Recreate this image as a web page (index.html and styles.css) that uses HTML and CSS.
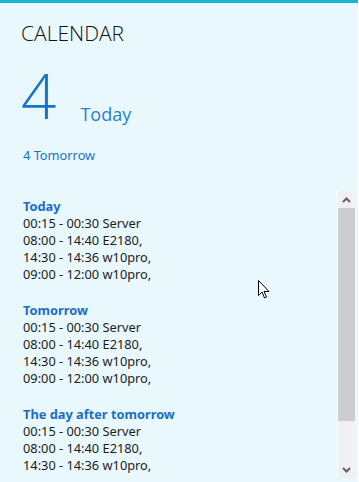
FILE: index.html
```html
<!DOCTYPE html>
<html lang="en">
<head>
    <meta charset="UTF-8">
    <meta name="viewport" content="width=device-width, initial-scale=1.0">
    <title>Calendar</title>
    <link rel="stylesheet" href="styles.css">
</head>
<body>
    <div id="painel">
        <h1 class="titulo">CALENDAR</h1>

        <div class="hoje">
            <span class="numero">4</span>
            <span class="rotulo">Today</span>
        </div>
        <p class="amanha">4 Tomorrow</p>

        <div class="lista-area">
            <div class="lista">
                <div class="dia">
                    <h2>Today</h2>
                    <p>00:15 - 00:30 Server</p>
                    <p>08:00 - 14:40 E2180,</p>
                    <p>14:30 - 14:36 w10pro,</p>
                    <p>09:00 - 12:00 w10pro,</p>
                </div>
                <div class="dia">
                    <h2>Tomorrow</h2>
                    <p>00:15 - 00:30 Server</p>
                    <p>08:00 - 14:40 E2180,</p>
                    <p>14:30 - 14:36 w10pro,</p>
                    <p>09:00 - 12:00 w10pro,</p>
                </div>
                <div class="dia">
                    <h2>The day after tomorrow</h2>
                    <p>00:15 - 00:30 Server</p>
                    <p>08:00 - 14:40 E2180,</p>
                    <p>14:30 - 14:36 w10pro,</p>
                </div>
            </div>
            <div class="barra">
                <div class="seta">
                    <svg width="9" height="6" viewBox="0 0 9 6"><path d="M1 5 L4.5 1.5 L8 5" fill="none" stroke="#606060" stroke-width="2"/></svg>
                </div>
                <div class="trilho"><div class="polegar"></div></div>
                <div class="seta">
                    <svg width="9" height="6" viewBox="0 0 9 6"><path d="M1 1 L4.5 4.5 L8 1" fill="none" stroke="#606060" stroke-width="2"/></svg>
                </div>
            </div>
        </div>

        <!-- ponteiro do mouse -->
        <svg class="cursor" width="13" height="20" viewBox="0 0 13 20">
            <path d="M0.5 0.5 L0.5 15.5 L4 12 L6.5 18 L8.5 17 L6 11.5 L11 11.5 Z" fill="#fff" stroke="#000" stroke-width="1"/>
        </svg>
    </div>
</body>
</html>
```

FILE: styles.css
```css
* {
    margin: 0;
    padding: 0;
    box-sizing: border-box;
}

body {
    font-family: "Noto Sans", "Open Sans", sans-serif;
    background-color: #fff;
    width: 359px;
    height: 482px;
    overflow: hidden;
}

#painel {
    position: relative;
    width: 358px;
    height: 482px;
    background-color: #e9f8fd;
    border-top: 3px solid #1ab3d3;
    padding: 16px 3px 4px 0;
    display: flex;
    flex-direction: column;
}

.titulo {
    font-family: "Open Sans", sans-serif;
    font-weight: 300;
    font-size: 21px;
    color: #111;
    padding-left: 21px;
    line-height: 28px;
}

.hoje {
    display: flex;
    align-items: baseline;
    padding-left: 21px;
    margin-top: 16px;
    height: 62px;
}

.numero {
    font-family: "Open Sans", sans-serif;
    font-weight: 300;
    font-size: 62px;
    line-height: 64px;
    color: #1673c9;
}

.rotulo {
    font-family: "Open Sans", sans-serif;
    font-size: 18px;
    color: #2a7fd0;
    margin-left: 24px;
    position: relative;
    top: 2px;
}

.amanha {
    font-size: 12.8px;
    color: #1a73c8;
    padding-left: 23px;
    margin-top: 21px;
}

.lista-area {
    display: flex;
    align-items: flex-start;
    margin-top: 27px;
    height: 287px;
}

.lista {
    flex: 1;
    height: 287px;
    overflow: hidden;
    padding: 7px 0 0 23px;
}

.dia {
    margin-bottom: 19px;
}

.dia h2 {
    font-size: 12.8px;
    font-weight: bold;
    color: #1a6ec4;
    line-height: 17px;
}

.dia p {
    font-size: 12.8px;
    color: #1b1b1b;
    line-height: 17px;
}

.barra {
    width: 18px;
    height: 287px;
    border-left: 1px solid #fff;
    background-color: #f0f0f0;
    display: flex;
    flex-direction: column;
}

.seta {
    height: 17px;
    display: flex;
    justify-content: center;
    align-items: center;
}

.trilho {
    flex: 1;
}

.polegar {
    height: 213px;
    background-color: #cdcdcd;
}

.cursor {
    position: absolute;
    left: 258px;
    top: 277px;
}
```
